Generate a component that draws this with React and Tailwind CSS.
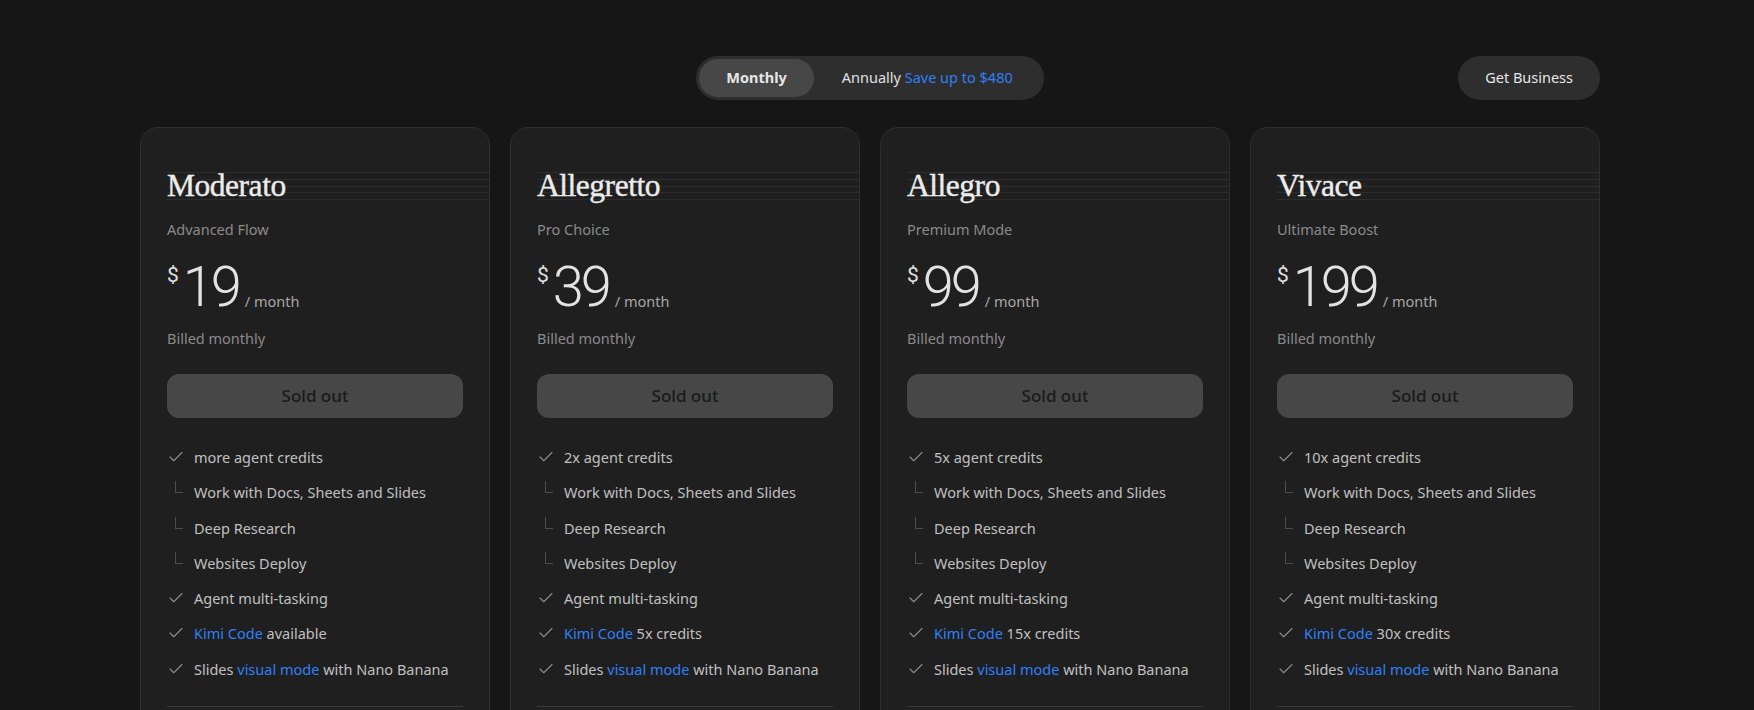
import { Check } from 'lucide-react'

const plans = [
  { name: 'Moderato', tag: 'Advanced Flow', price: '19', credits: 'more agent credits', code: 'available' },
  { name: 'Allegretto', tag: 'Pro Choice', price: '39', credits: '2x agent credits', code: '5x credits' },
  { name: 'Allegro', tag: 'Premium Mode', price: '99', credits: '5x agent credits', code: '15x credits' },
  { name: 'Vivace', tag: 'Ultimate Boost', price: '199', credits: '10x agent credits', code: '30x credits' },
]

const ui = { fontFamily: '"Noto Sans", "Open Sans", sans-serif' }

function Tick() {
  return (
    <span className="w-[18px] h-[20px] shrink-0 flex items-center justify-center">
      <Check size={18} strokeWidth={1.5} className="text-[#8c8c8c]" />
    </span>
  )
}

function Branch() {
  return (
    <span className="w-[18px] h-[20px] shrink-0 relative">
      <span className="absolute left-[8px] top-[-1px] w-[8px] h-[12px] border-l border-b border-[#4d4d4d]" />
    </span>
  )
}

function Row({ icon, children }) {
  return (
    <li className="flex items-center gap-[9px] h-[20px] text-[14.5px] leading-[20px] text-[#c0c0c0]">
      {icon === 'tick' ? <Tick /> : <Branch />}
      <span>{children}</span>
    </li>
  )
}

function Card({ plan }) {
  return (
    <div className="bg-[#1f1f1f] border border-[#2e2e2e] rounded-[18px] overflow-hidden px-[26px] pt-[42px] pb-10">
      <div className="relative">
        <div className="absolute left-0 right-[-27px] top-[2px] h-[28px] flex flex-col justify-between">
          {[0, 1, 2, 3, 4].map((i) => (
            <div key={i} className="h-px bg-[#2c2c2c]" />
          ))}
        </div>
        <h2
          className="relative text-[31.5px] leading-[31px] text-[#ececec] tracking-[-0.015em] [-webkit-text-stroke:0.4px_#ececec]"
          style={{ fontFamily: '"Liberation Serif", "DejaVu Serif", serif' }}
        >
          {plan.name}
        </h2>
      </div>

      <p className="mt-[18px] text-[14.5px] leading-[20px] text-[#8a8a8a]" style={ui}>{plan.tag}</p>

      <div className="mt-[19px] flex items-end">
        <span className="self-start mt-[6px] text-[21px] leading-[22px] text-[#e0e0e0]" style={{ fontFamily: 'Roboto, sans-serif' }}>$</span>
        <span
          className="ml-[4px] text-[56px] leading-[58px] font-light text-[#e3e3e3] tracking-[-0.055em]"
          style={{ fontFamily: 'Roboto, sans-serif' }}
        >
          {plan.price}
        </span>
        <span className="ml-[6px] mb-[5px] text-[14.5px] leading-[20px] text-[#a6a6a6]" style={ui}>/ month</span>
      </div>

      <p className="mt-[12px] text-[14.5px] leading-[20px] text-[#8a8a8a]" style={ui}>Billed monthly</p>

      <button
        className="mt-[26px] w-full h-[44px] rounded-[12px] bg-[#474747] text-[17px] font-medium text-[#1a1a1a]"
        style={ui}
      >
        Sold out
      </button>

      <ul className="mt-[29px] flex flex-col gap-[15.3px]" style={ui}>
        <Row icon="tick">{plan.credits}</Row>
        <Row icon="branch">Work with Docs, Sheets and Slides</Row>
        <Row icon="branch">Deep Research</Row>
        <Row icon="branch">Websites Deploy</Row>
        <Row icon="tick">Agent multi-tasking</Row>
        <Row icon="tick">
          <span className="text-[#2f7ff7]">Kimi Code</span> {plan.code}
        </Row>
        <Row icon="tick">
          Slides <span className="text-[#2f7ff7]">visual mode</span> with Nano Banana
        </Row>
      </ul>

      <div className="mt-[27px] h-px bg-[#3a3a3a]" />
      <div className="h-24" />
    </div>
  )
}

export default function App() {
  return (
    <div className="h-[710px] overflow-hidden bg-[#161616]" style={ui}>
      <div className="w-[1740px]">
        <div className="w-[1460px] mx-auto pt-[56px]">
          <div className="grid grid-cols-[1fr_auto_1fr] items-center">
            <div />
            <div className="flex items-center h-[44px] p-[3px] rounded-full bg-[#2e2e2e]">
              <span className="h-[38px] px-[27px] flex items-center rounded-full bg-[#474747] text-[14.5px] font-bold text-[#e6e6e6]">
                Monthly
              </span>
              <span className="px-[28px] text-[14.5px] text-[#e0e0e0]">
                Annually <span className="text-[#2f7ff7]">Save up to $480</span>
              </span>
            </div>
            <div className="flex justify-end">
              <button className="h-[44px] px-[27px] rounded-full bg-[#2e2e2e] text-[14.5px] text-[#e6e6e6]">
                Get Business
              </button>
            </div>
          </div>

          <div className="mt-[27px] grid grid-cols-4 gap-[20px]">
            {plans.map((p) => (
              <Card key={p.name} plan={p} />
            ))}
          </div>
        </div>
      </div>
    </div>
  )
}
